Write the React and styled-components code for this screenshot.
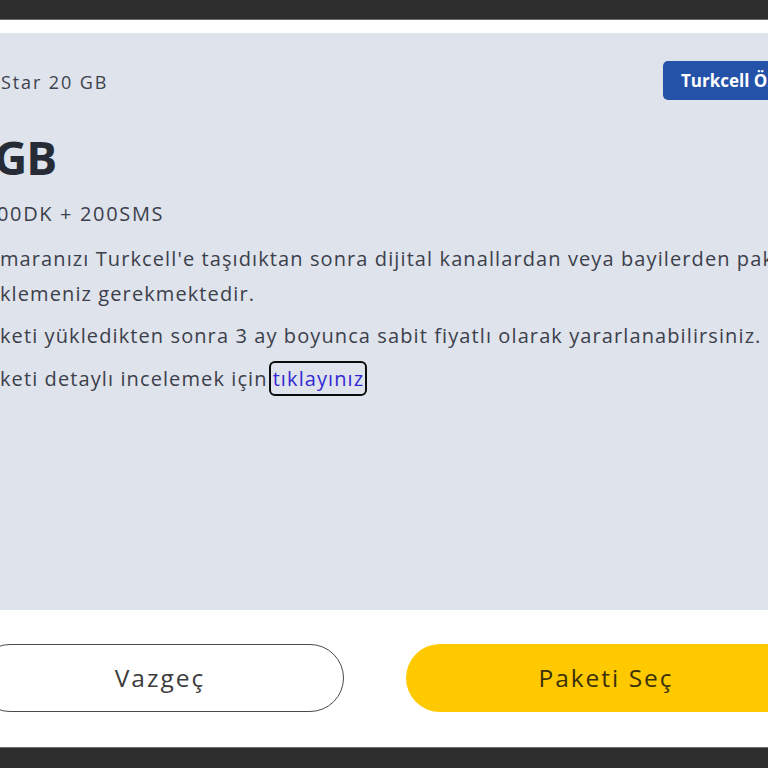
import React from "react";
import styled, { createGlobalStyle } from "styled-components";

const Global = createGlobalStyle`
  html, body { margin: 0; padding: 0; }
  body {
    background: #2e2e2e;
    font-family: "Open Sans", "Noto Sans", sans-serif;
    overflow: hidden;
  }
`;

const Page = styled.div`
  width: 768px;
  height: 768px;
  display: flex;
  flex-direction: column;
  overflow: hidden;
`;

const Bar = styled.div`
  flex: none;
  height: ${(p) => p.$h}px;
  background: #2e2e2e;
  border-${(p) => p.$edge}: 1px solid #6b6b6b;
`;

const Modal = styled.div`
  flex: 1;
  background: #ffffff;
  display: flex;
  flex-direction: column;
  padding-top: 13px;
  min-height: 0;
`;

const Panel = styled.section`
  flex: none;
  height: 577px;
  background: #dfe3ec;
  padding-top: 28px;
  box-sizing: border-box;
  color: #3b404b;
  overflow: hidden;
`;

const HeaderRow = styled.div`
  display: flex;
  align-items: center;
  justify-content: space-between;
  height: 39px;
`;

const PlanName = styled.span`
  font-size: 18px;
  letter-spacing: 1.9px;
  color: #3d424c;
  margin: 3px 0 0 1px;
`;

const Badge = styled.span`
  background: #2452a8;
  color: #ffffff;
  font-weight: 700;
  font-size: 17px;
  height: 39px;
  display: flex;
  align-items: center;
  padding: 0 18px;
  border-radius: 5px;
  white-space: nowrap;
  margin-right: -51px;
  width: 120px;
  overflow: hidden;
`;

const Title = styled.h1`
  margin: 32px 0 0 -6px;
  font-size: 46px;
  font-weight: 700;
  line-height: 50px;
  color: #262b35;
  letter-spacing: -1px;
`;

const Quota = styled.div`
  margin: 17px 0 0 -3px;
  font-size: 20px;
  line-height: 30px;
  letter-spacing: 1.65px;
  color: #3b404b;
`;

const Paragraph = styled.p`
  margin: ${(p) => p.$top}px 0 0 0;
  font-size: 20px;
  line-height: 35px;
  white-space: nowrap;
  letter-spacing: 1.1px;
  color: #3b404b;
`;

const Link = styled.a`
  color: #3329d2;
  text-decoration: none;
  outline: 2px solid #0c0c0c;
  outline-offset: 0px;
  border-radius: 4px;
  padding: 2px 1px 2px 2px;
  margin-left: 3px;
`;

const Footer = styled.div`
  flex: 1;
  display: flex;
  align-items: center;
  gap: 62px;
  margin-left: -24px;
  padding-bottom: 2px;
`;

const Button = styled.button`
  flex: none;
  width: ${(p) => p.$w}px;
  height: 68px;
  border-radius: 34px;
  font-family: "Open Sans", "Noto Sans", sans-serif;
  font-size: 24.5px;
  letter-spacing: 2px;
  cursor: pointer;
  border: ${(p) => (p.$primary ? "none" : "1.5px solid #4a4a4a")};
  background: ${(p) => (p.$primary ? "#ffc900" : "#ffffff")};
  color: ${(p) => (p.$primary ? "#3a3108" : "#3c3c3c")};
`;

export default function App() {
  return (
    <>
      <Global />
      <Page>
        <Bar $h={19} $edge="bottom" />
        <Modal>
          <Panel>
            <HeaderRow>
              <PlanName>Star 20 GB</PlanName>
              <Badge>Turkcell Özel</Badge>
            </HeaderRow>
            <Title>GB</Title>
            <Quota>00DK + 200SMS</Quota>
            <Paragraph $top={12}>
              maranızı Turkcell'e taşıdıktan sonra dijital kanallardan veya bayilerden paketi
              <br />
              klemeniz gerekmektedir.
            </Paragraph>
            <Paragraph $top={7}>
              keti yükledikten sonra 3 ay boyunca sabit fiyatlı olarak yararlanabilirsiniz.
            </Paragraph>
            <Paragraph $top={8}>
              keti detaylı incelemek için<Link href="#">tıklayınız</Link>
            </Paragraph>
          </Panel>
          <Footer>
            <Button $w={368}>Vazgeç</Button>
            <Button $w={400} $primary>Paketi Seç</Button>
          </Footer>
        </Modal>
        <Bar $h={20} $edge="top" />
      </Page>
    </>
  );
}
